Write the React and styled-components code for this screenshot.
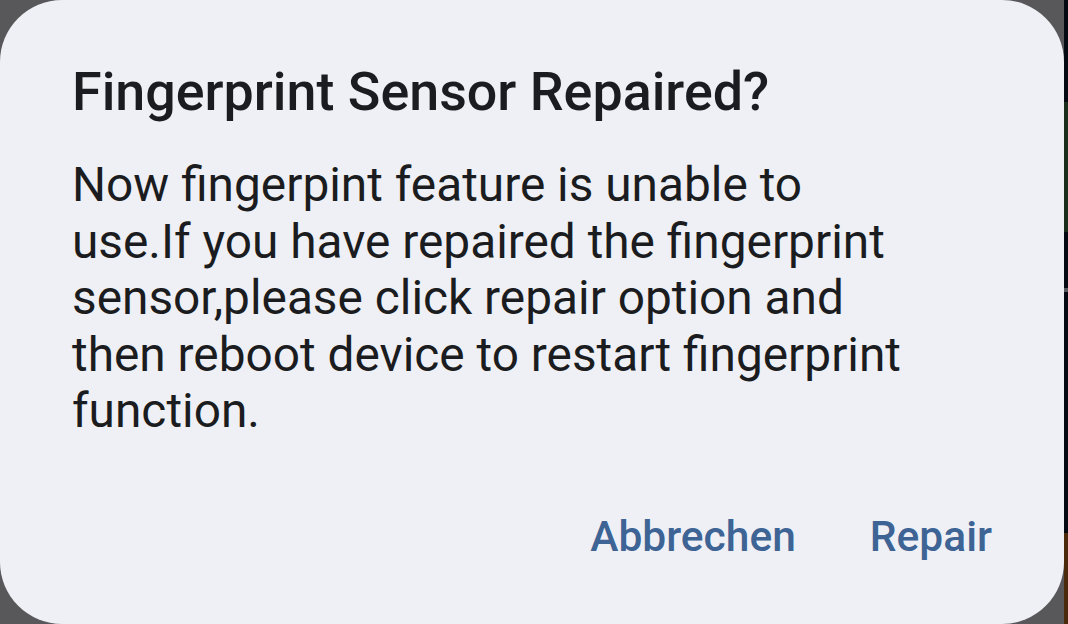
import React from "react";
import styled, { createGlobalStyle } from "styled-components";

const Global = createGlobalStyle`
  html, body { margin: 0; padding: 0; }
  body {
    width: 1068px;
    height: 624px;
    overflow: hidden;
    background: #58585a;
    font-family: Roboto, "Noto Sans", sans-serif;
  }
`;

const Screen = styled.div`
  display: flex;
  width: 1068px;
  height: 624px;
`;

const Dialog = styled.section`
  box-sizing: border-box;
  width: 1064px;
  height: 624px;
  background: #eff0f6;
  border-radius: 62px;
  padding: 62px 72px 0 72px;
  display: flex;
  flex-direction: column;
`;

const Title = styled.h2`
  margin: 0;
  font-family: Roboto, sans-serif;
  font-weight: 500;
  font-size: 53.8px;
  line-height: 60px;
  color: #1b1c20;
  letter-spacing: 0;
  white-space: nowrap;
`;

const Body = styled.p`
  margin: 35px 0 0 0;
  max-width: 840px;
  font-family: Roboto, sans-serif;
  font-weight: 400;
  font-size: 47.8px;
  line-height: 56.5px;
  color: #1b1c20;
`;

const Actions = styled.div`
  margin-top: auto;
  margin-bottom: 63px;
  display: flex;
  justify-content: flex-end;
  gap: 74px;
`;

const ActionButton = styled.button`
  background: none;
  border: none;
  padding: 0;
  font-family: Roboto, sans-serif;
  font-weight: 500;
  font-size: 42.5px;
  line-height: 48px;
  color: #3d6494;
  cursor: pointer;
`;

const EdgeStrip = styled.div`
  width: 4px;
  height: 624px;
  background: #050a12;
  position: relative;
`;

const EdgeMark = styled.div`
  position: absolute;
  left: 0;
  width: 4px;
  top: ${(p) => p.$top}px;
  height: ${(p) => p.$h}px;
  background: ${(p) => p.$c};
`;

export default function App() {
  return (
    <>
      <Global />
      <Screen>
        <Dialog>
          <Title>Fingerprint Sensor Repaired?</Title>
          <Body>
            Now fingerpint feature is unable to use.If you have repaired the
            fingerprint sensor,please click repair option and then reboot
            device to restart fingerprint function.
          </Body>
          <Actions>
            <ActionButton>Abbrechen</ActionButton>
            <ActionButton>Repair</ActionButton>
          </Actions>
        </Dialog>
        <EdgeStrip>
          <EdgeMark $top={102} $h={130} $c="#1b2e1c" />
          <EdgeMark $top={288} $h={4} $c="#55585c" />
          <EdgeMark $top={533} $h={91} $c="#4a2a0a" />
        </EdgeStrip>
      </Screen>
    </>
  );
}
